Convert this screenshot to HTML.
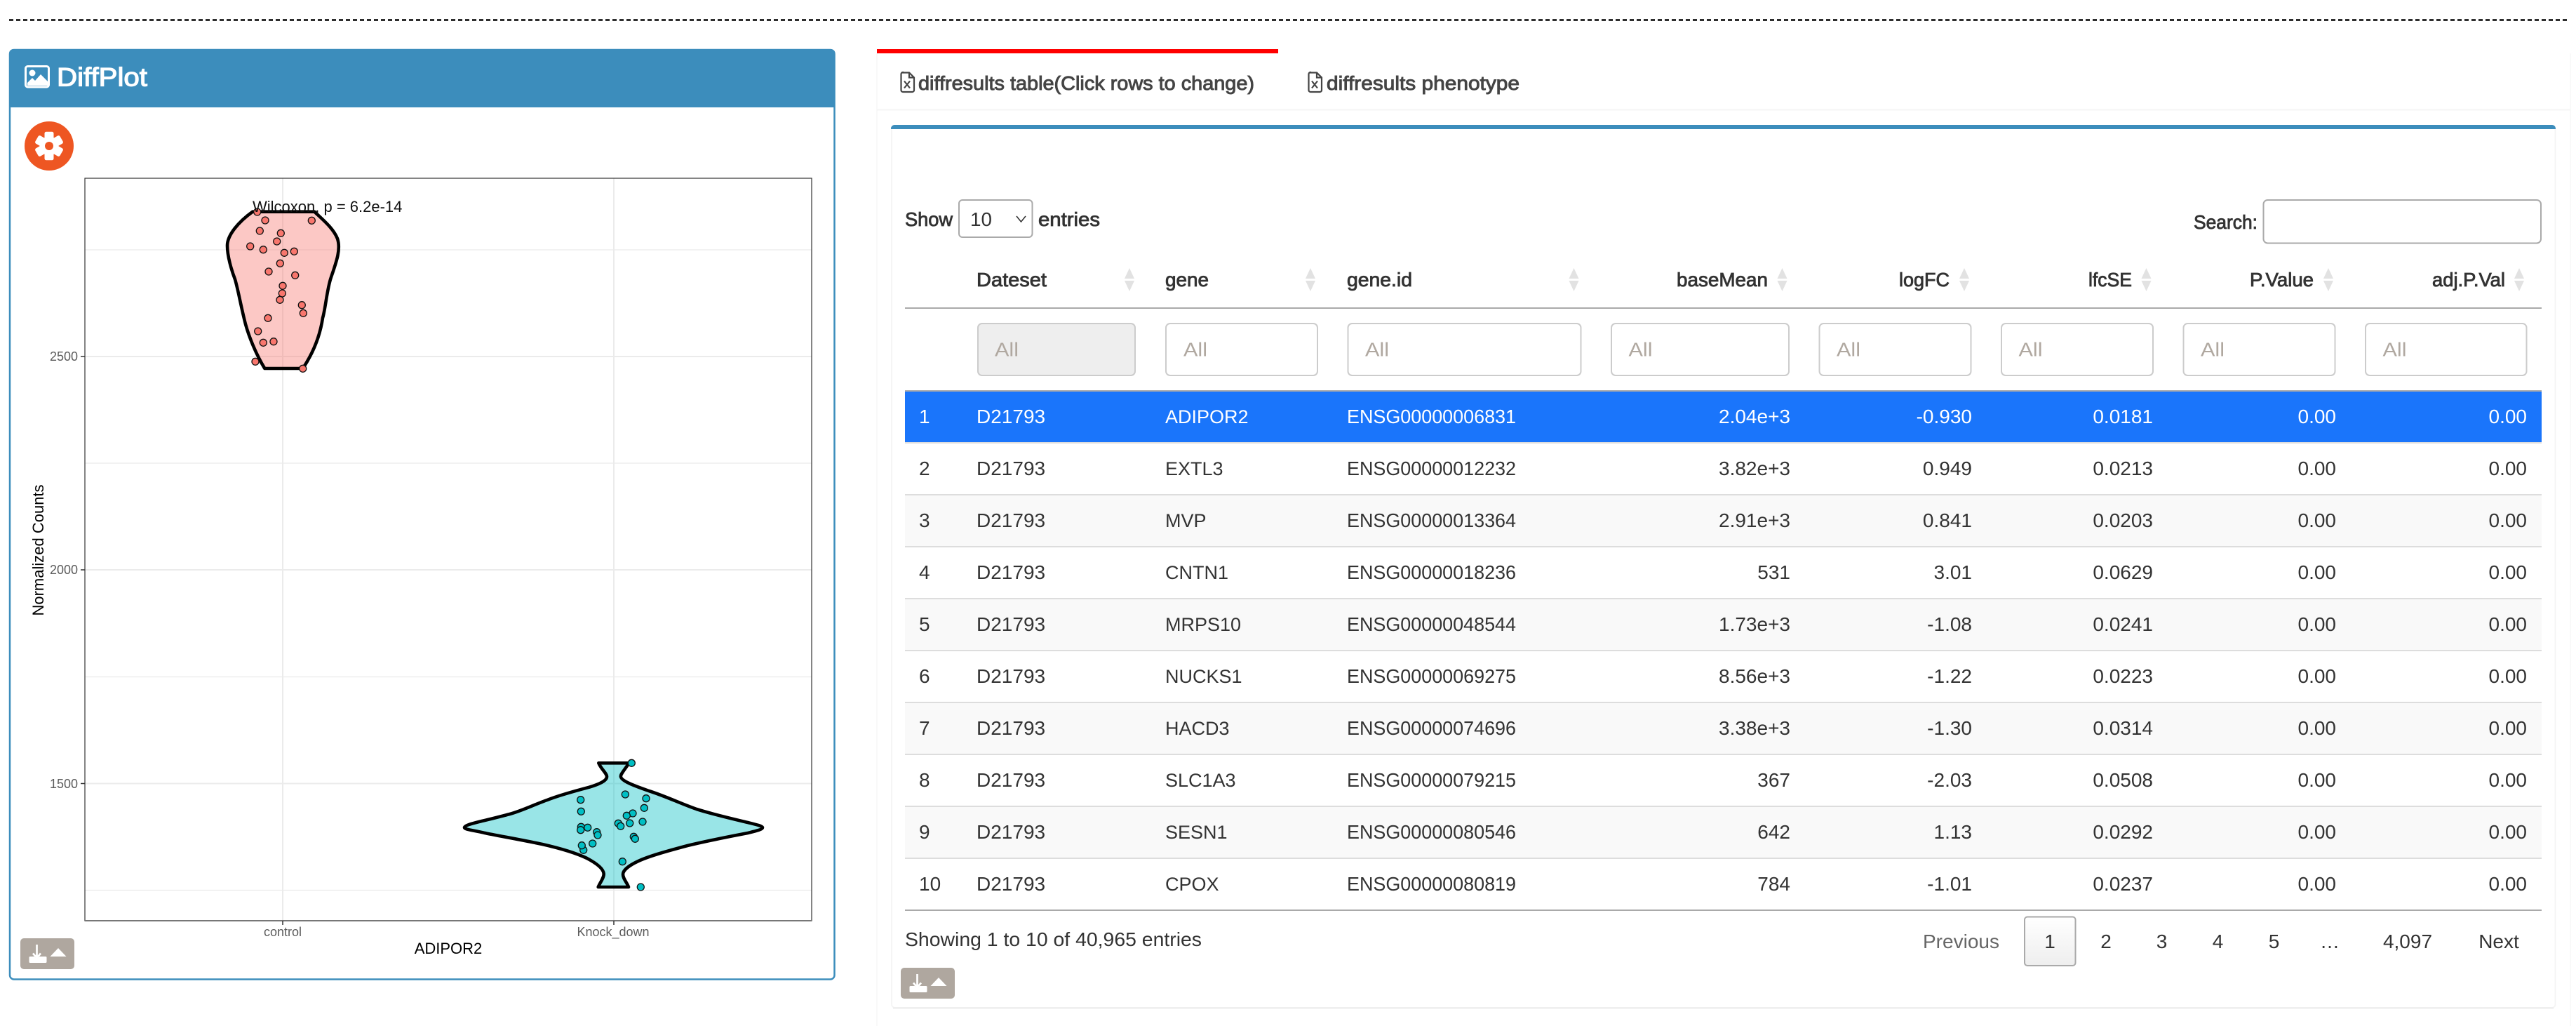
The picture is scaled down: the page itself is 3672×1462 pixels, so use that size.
<!DOCTYPE html>
<html><head><meta charset="utf-8"><title>DiffPlot</title>
<style>
html,body{margin:0;padding:0;background:#fff;width:3672px;height:1462px;overflow:hidden}
svg{display:block}
text{font-family:"Liberation Sans",Arial,sans-serif;font-size:28px;fill:#333}
.m{stroke:#333;stroke-width:.85px}
.t{fill:#444;stroke:#444;stroke-width:.95px}
.al{fill:#b0a8a0}
.r{text-anchor:end}
.w text{fill:#fff}
.arrow{fill:#e2e2e2}
.pg{text-anchor:middle}
.ax{font-size:18px;fill:#5c5c5c}
.f{fill:#fff;stroke:#ccc;stroke-width:2}
.pd circle{fill:#F8766D;stroke:#111;stroke-width:1.3}
.td circle{fill:#00BFC4;stroke:#111;stroke-width:1.3}
</style></head><body>
<svg xmlns="http://www.w3.org/2000/svg" width="3672" height="1462" viewBox="0 0 3672 1462">
<defs>
<g id="dl">
<rect width="77" height="44" rx="5" fill="#afa79f"/>
<path d="M12,26 h8 l3.5,3.5 l3.5,-3.5 h9 a1.5,1.5 0 0 1 1.5,1.5 v6 a1.5,1.5 0 0 1 -1.5,1.5 h-22 a1.5,1.5 0 0 1 -1.5,-1.5 v-6 a1.5,1.5 0 0 1 1.5,-1.5z" fill="#fff"/>
<path d="M23.5,9 V28 M18,21.500 L23.5,28 L29,21.500" fill="none" stroke="#fff" stroke-width="2.700"/>
<path d="M42.5,26 L54,14 L65.5,26Z" fill="#fff"/>
</g>
<g id="xl" fill="none" stroke="#444" stroke-width="2.2">
<path d="M5,1 h9 l7,7 v18 a2.5,2.5 0 0 1 -2.5,2.5 h-13.5 a2.5,2.5 0 0 1 -2.5,-2.5 v-23 a2.5,2.5 0 0 1 2.5,-2.5z"/>
<path d="M14,1 v7 h7"/>
<path d="M7,13 L15,23 M15,13 L7,23"/>
</g>
<g id="sort"><path class="arrow" d="M0,-14 L7,1 H-7Z M0,19 L7,4 H-7Z"/></g>
</defs>

<!-- dashed rule -->
<line x1="13" y1="28.5" x2="3663" y2="28.5" stroke="#000" stroke-width="2.4" stroke-dasharray="6 4"/>

<!-- LEFT PANEL -->
<rect x="14" y="71" width="1175.500" height="1324.500" rx="6" fill="#fff" stroke="#3c8dbc" stroke-width="2.500"/>
<path d="M13,153 V76 a6,6 0 0 1 6,-6 H1184.500 a6,6 0 0 1 6,6 V153Z" fill="#3c8dbc"/>
<g>
<rect x="36.500" y="94.500" width="33" height="29.500" rx="3" fill="none" stroke="#fff" stroke-width="3"/>
<circle cx="46" cy="104" r="4.500" fill="#fff"/>
<path d="M39,122 V118 L46,111 L50,115 L58,106 L68,116 V122Z" fill="#fff"/>
<text x="81" y="122.500" textLength="129" lengthAdjust="spacingAndGlyphs" style="font-size:37px;fill:#fff;stroke:#fff;stroke-width:1.200px">DiffPlot</text>
</g>
<circle cx="70" cy="208" r="35" fill="#ee5622"/>
<g fill="#fff">
<circle cx="70" cy="208" r="13.500"/>
<rect x="63.500" y="187.700" width="13" height="40.600" rx="2.500"/>
<rect x="63.500" y="187.700" width="13" height="40.600" rx="2.500" transform="rotate(60 70 208)"/>
<rect x="63.500" y="187.700" width="13" height="40.600" rx="2.500" transform="rotate(120 70 208)"/>
</g>
<circle cx="70" cy="208" r="6" fill="#ee5622"/>

<!-- plot -->
<g stroke="#ebebeb" fill="none">
<path stroke-width="1.200" d="M121,356H1157 M121,660H1157 M121,964.500H1157 M121,1268.500H1157"/>
<path stroke-width="2" d="M121,508H1157 M121,812H1157 M121,1116.500H1157 M403,254V1312 M875,254V1312"/>
</g>
<path d="M360,301.700 L448.300,301.700 C460,313 475,325 481,340 C486,355 480,372 472,395 C466,412 464,440 460,453 C456,480 445,505 431.700,525 L377.300,525 C365,505 355,480 350,462 C343,435 340,415 335,398 C330,385 324,365 324,350 C324,335 340,316 360,301.700Z" fill="#F8766D" fill-opacity=".4" stroke="#000" stroke-width="4.600" stroke-linejoin="round"/>
<g class="pd">
<circle cx="366.700" cy="302" r="5"/><circle cx="378" cy="314" r="5"/><circle cx="444.300" cy="314.300" r="5"/><circle cx="370.300" cy="329" r="5"/><circle cx="400.300" cy="332.300" r="5"/><circle cx="394.700" cy="344" r="5"/><circle cx="356.700" cy="351" r="5"/><circle cx="375.300" cy="355.700" r="5"/><circle cx="405.300" cy="360.300" r="5"/><circle cx="419.300" cy="358.300" r="5"/><circle cx="399.300" cy="375.300" r="5"/><circle cx="383" cy="387" r="5"/><circle cx="420.700" cy="392.300" r="5"/><circle cx="403" cy="407.300" r="5"/><circle cx="402.300" cy="418" r="5"/><circle cx="399" cy="427.300" r="5"/><circle cx="430.300" cy="434.700" r="5"/><circle cx="432.300" cy="446.300" r="5"/><circle cx="382" cy="453.300" r="5"/><circle cx="367.700" cy="472" r="5"/><circle cx="375.300" cy="488.300" r="5"/><circle cx="390" cy="486.700" r="5"/><circle cx="364" cy="515.300" r="5"/><circle cx="431.700" cy="525.300" r="5"/>
</g>
<path d="M853.300,1087.300 L896.700,1087.300 C888,1100 884,1104 885,1107 C886,1113 905,1120 925,1127 C950,1135 970,1145 993,1153 C1015,1160 1045,1167 1066,1172 C1078,1175 1087,1177 1087,1179.300 C1087,1182 1078,1184 1066,1187 C1045,1191 1005,1199 980,1205 C950,1213 925,1220 910,1227 C897,1233 888,1240 888,1246 C888,1252 894,1258 896,1264 L852.700,1264 C855,1258 861,1251 860.700,1245 C860,1237 848,1229 836.700,1223 C820,1215 795,1208 773,1203 C745,1197 705,1190 690,1186.700 C675,1183 662,1182 662,1179.300 C662,1176 675,1173 686.700,1170 C700,1167 715,1163 726.700,1160 C745,1155 765,1145 780,1140 C795,1134 820,1127 840,1121.700 C852,1118 865,1113 865,1106.700 C865,1102 857,1096 853.300,1087.300Z" fill="#00BFC4" fill-opacity=".4" stroke="#000" stroke-width="4.600" stroke-linejoin="round"/>
<g class="td">
<circle cx="900.300" cy="1087.300" r="5"/><circle cx="827.700" cy="1139.700" r="5"/><circle cx="828.300" cy="1156.300" r="5"/><circle cx="828.300" cy="1178.300" r="5"/><circle cx="827.700" cy="1182.700" r="5"/><circle cx="837.700" cy="1179.300" r="5"/><circle cx="850.700" cy="1185.700" r="5"/><circle cx="852" cy="1190" r="5"/><circle cx="844.700" cy="1202" r="5"/><circle cx="831.700" cy="1211.300" r="5"/><circle cx="829.300" cy="1204.700" r="5"/><circle cx="891.300" cy="1132" r="5"/><circle cx="921" cy="1137.700" r="5"/><circle cx="918.300" cy="1151.300" r="5"/><circle cx="902" cy="1159" r="5"/><circle cx="893.300" cy="1162.300" r="5"/><circle cx="881.300" cy="1173.300" r="5"/><circle cx="884.700" cy="1177.300" r="5"/><circle cx="897.700" cy="1173" r="5"/><circle cx="916" cy="1171" r="5"/><circle cx="903.300" cy="1192.300" r="5"/><circle cx="905.300" cy="1195.300" r="5"/><circle cx="887.300" cy="1227.700" r="5"/><circle cx="913.300" cy="1264" r="5"/>
</g>
<rect x="121" y="254" width="1036" height="1058" fill="none" stroke="#333" stroke-width="1.200"/>
<path d="M121,1312H1157" stroke="#777" stroke-width="2"/>
<path d="M115,508H121 M115,812H121 M115,1116.500H121 M403,1312V1318 M875,1312V1318" stroke="#333" stroke-width="1.500"/>
<text x="360" y="302" style="font-size:22px;fill:#111">Wilcoxon, p = 6.2e-14</text>
<text class="ax r" x="111" y="514">2500</text>
<text class="ax r" x="111" y="818">2000</text>
<text class="ax r" x="111" y="1123">1500</text>
<text class="ax" x="403" y="1334" text-anchor="middle">control</text>
<text class="ax" x="874" y="1334" text-anchor="middle">Knock_down</text>
<text x="639" y="1359" text-anchor="middle" style="font-size:22px;fill:#000">ADIPOR2</text>
<text x="0" y="0" transform="translate(62 784) rotate(-90)" text-anchor="middle" style="font-size:22px;fill:#000">Normalized Counts</text>
<use href="#dl" x="29" y="1337"/>

<!-- RIGHT: tabs -->
<path d="M1250,76V1462 M3664,76V1462" stroke="#f7f7f7" stroke-width="1.500" fill="none"/>
<path d="M1250,156.500H3664" stroke="#f4f4f4" stroke-width="2"/>
<rect x="1250" y="70" width="572" height="6" fill="#f00"/>
<use href="#xl" x="1282" y="102.500"/>
<text class="t" x="1309" y="128" textLength="479" lengthAdjust="spacingAndGlyphs">diffresults table(Click rows to change)</text>
<use href="#xl" x="1863" y="102.500"/>
<text class="t" x="1891" y="128" textLength="275" lengthAdjust="spacingAndGlyphs">diffresults phenotype</text>

<!-- box -->
<rect x="1271" y="180" width="2371.500" height="1256" rx="5" fill="#fff" stroke="#f5f5f5" stroke-width="2"/>
<path d="M1273,1436.500H3640" stroke="#ececec" stroke-width="2"/>
<path d="M1270,184 v-1 a5,5 0 0 1 5,-5 H3638 a5,5 0 0 1 5,5 v1Z" fill="#3c8dbc"/>

<!-- length + search -->
<text class="m" x="1290" y="322" textLength="68" lengthAdjust="spacingAndGlyphs">Show</text>
<rect x="1367" y="285" width="104.500" height="53" rx="5" fill="#fff" stroke="#aaa" stroke-width="2"/>
<text x="1383" y="322" textLength="31" lengthAdjust="spacingAndGlyphs">10</text>
<path d="M1449,308 L1455.500,316 L1462,308" fill="none" stroke="#333" stroke-width="1.600"/>
<text class="m" x="1480" y="322" textLength="88" lengthAdjust="spacingAndGlyphs">entries</text>
<text class="m" x="3127" y="326" textLength="91" lengthAdjust="spacingAndGlyphs">Search:</text>
<rect x="3226.500" y="285" width="395.500" height="61.500" rx="6" fill="#fff" stroke="#aaa" stroke-width="2"/>

<!-- header -->
<text class="m" x="1392" y="408" textLength="100" lengthAdjust="spacingAndGlyphs">Dateset</text>
<text class="m" x="1661" y="408" textLength="62" lengthAdjust="spacingAndGlyphs">gene</text>
<text class="m" x="1920" y="408" textLength="93" lengthAdjust="spacingAndGlyphs">gene.id</text>
<text class="m" x="2390" y="408" textLength="130" lengthAdjust="spacingAndGlyphs">baseMean</text>
<text class="m" x="2707" y="408" textLength="72" lengthAdjust="spacingAndGlyphs">logFC</text>
<text class="m" x="2977" y="408" textLength="62" lengthAdjust="spacingAndGlyphs">lfcSE</text>
<text class="m" x="3207" y="408" textLength="91" lengthAdjust="spacingAndGlyphs">P.Value</text>
<text class="m" x="3467" y="408" textLength="104" lengthAdjust="spacingAndGlyphs">adj.P.Val</text>
<use href="#sort" x="1610" y="396"/><use href="#sort" x="1868" y="396"/><use href="#sort" x="2243.500" y="396"/><use href="#sort" x="2540.500" y="396"/><use href="#sort" x="2800" y="396"/><use href="#sort" x="3059.500" y="396"/><use href="#sort" x="3319" y="396"/><use href="#sort" x="3591" y="396"/>
<rect x="1290" y="438" width="2333" height="2" fill="#aaa"/>

<!-- filters -->
<rect class="f" x="1394" y="461" width="224" height="74" rx="6" style="fill:#eee"/>
<rect class="f" x="1662" y="461" width="216" height="74" rx="6"/>
<rect class="f" x="1921.500" y="461" width="332" height="74" rx="6"/>
<rect class="f" x="2297" y="461" width="253" height="74" rx="6"/>
<rect class="f" x="2593.500" y="461" width="216" height="74" rx="6"/>
<rect class="f" x="2853" y="461" width="216" height="74" rx="6"/>
<rect class="f" x="3112.500" y="461" width="216" height="74" rx="6"/>
<rect class="f" x="3372" y="461" width="229.500" height="74" rx="6"/>
<g class="al">
<text class="al" x="1418" y="507.500" textLength="34" lengthAdjust="spacingAndGlyphs">All</text>
<text class="al" x="1687" y="507.500" textLength="34" lengthAdjust="spacingAndGlyphs">All</text>
<text class="al" x="1946" y="507.500" textLength="34" lengthAdjust="spacingAndGlyphs">All</text>
<text class="al" x="2321.500" y="507.500" textLength="34" lengthAdjust="spacingAndGlyphs">All</text>
<text class="al" x="2618" y="507.500" textLength="34" lengthAdjust="spacingAndGlyphs">All</text>
<text class="al" x="2877.500" y="507.500" textLength="34" lengthAdjust="spacingAndGlyphs">All</text>
<text class="al" x="3137" y="507.500" textLength="34" lengthAdjust="spacingAndGlyphs">All</text>
<text class="al" x="3396.500" y="507.500" textLength="34" lengthAdjust="spacingAndGlyphs">All</text>
</g>

<!-- rows -->
<rect x="1290" y="556" width="2333" height="2" fill="#aaa"/>
<rect x="1290" y="558" width="2333" height="72" fill="#1a75fb"/>
<rect x="1290" y="706" width="2333" height="72" fill="#f9f9f9"/>
<rect x="1290" y="854" width="2333" height="72" fill="#f9f9f9"/>
<rect x="1290" y="1002" width="2333" height="72" fill="#f9f9f9"/>
<rect x="1290" y="1150" width="2333" height="72" fill="#f9f9f9"/>
<path d="M1290,631H3623 M1290,705H3623 M1290,779H3623 M1290,853H3623 M1290,927H3623 M1290,1001H3623 M1290,1075H3623 M1290,1149H3623 M1290,1223H3623" stroke="#ddd" stroke-width="2"/>
<rect x="1290" y="1296" width="2333" height="2" fill="#aaa"/>

<g class="w">
<text x="1310" y="603">1</text><text x="1392" y="603">D21793</text><text x="1661" y="603" style="font-size:27px">ADIPOR2</text><text x="1920" y="603" textLength="241" lengthAdjust="spacingAndGlyphs">ENSG00000006831</text><text class="r" x="2552" y="603">2.04e+3</text><text class="r" x="2811" y="603">-0.930</text><text class="r" x="3069" y="603">0.0181</text><text class="r" x="3330" y="603">0.00</text><text class="r" x="3602" y="603">0.00</text>
</g>
<text x="1310" y="677">2</text><text x="1392" y="677">D21793</text><text x="1661" y="677" style="font-size:27px">EXTL3</text><text x="1920" y="677" textLength="241" lengthAdjust="spacingAndGlyphs">ENSG00000012232</text><text class="r" x="2552" y="677">3.82e+3</text><text class="r" x="2811" y="677">0.949</text><text class="r" x="3069" y="677">0.0213</text><text class="r" x="3330" y="677">0.00</text><text class="r" x="3602" y="677">0.00</text>
<text x="1310" y="751">3</text><text x="1392" y="751">D21793</text><text x="1661" y="751" style="font-size:27px">MVP</text><text x="1920" y="751" textLength="241" lengthAdjust="spacingAndGlyphs">ENSG00000013364</text><text class="r" x="2552" y="751">2.91e+3</text><text class="r" x="2811" y="751">0.841</text><text class="r" x="3069" y="751">0.0203</text><text class="r" x="3330" y="751">0.00</text><text class="r" x="3602" y="751">0.00</text>
<text x="1310" y="825">4</text><text x="1392" y="825">D21793</text><text x="1661" y="825" style="font-size:27px">CNTN1</text><text x="1920" y="825" textLength="241" lengthAdjust="spacingAndGlyphs">ENSG00000018236</text><text class="r" x="2552" y="825">531</text><text class="r" x="2811" y="825">3.01</text><text class="r" x="3069" y="825">0.0629</text><text class="r" x="3330" y="825">0.00</text><text class="r" x="3602" y="825">0.00</text>
<text x="1310" y="899">5</text><text x="1392" y="899">D21793</text><text x="1661" y="899" style="font-size:27px">MRPS10</text><text x="1920" y="899" textLength="241" lengthAdjust="spacingAndGlyphs">ENSG00000048544</text><text class="r" x="2552" y="899">1.73e+3</text><text class="r" x="2811" y="899">-1.08</text><text class="r" x="3069" y="899">0.0241</text><text class="r" x="3330" y="899">0.00</text><text class="r" x="3602" y="899">0.00</text>
<text x="1310" y="973">6</text><text x="1392" y="973">D21793</text><text x="1661" y="973" style="font-size:27px">NUCKS1</text><text x="1920" y="973" textLength="241" lengthAdjust="spacingAndGlyphs">ENSG00000069275</text><text class="r" x="2552" y="973">8.56e+3</text><text class="r" x="2811" y="973">-1.22</text><text class="r" x="3069" y="973">0.0223</text><text class="r" x="3330" y="973">0.00</text><text class="r" x="3602" y="973">0.00</text>
<text x="1310" y="1047">7</text><text x="1392" y="1047">D21793</text><text x="1661" y="1047" style="font-size:27px">HACD3</text><text x="1920" y="1047" textLength="241" lengthAdjust="spacingAndGlyphs">ENSG00000074696</text><text class="r" x="2552" y="1047">3.38e+3</text><text class="r" x="2811" y="1047">-1.30</text><text class="r" x="3069" y="1047">0.0314</text><text class="r" x="3330" y="1047">0.00</text><text class="r" x="3602" y="1047">0.00</text>
<text x="1310" y="1121">8</text><text x="1392" y="1121">D21793</text><text x="1661" y="1121" style="font-size:27px">SLC1A3</text><text x="1920" y="1121" textLength="241" lengthAdjust="spacingAndGlyphs">ENSG00000079215</text><text class="r" x="2552" y="1121">367</text><text class="r" x="2811" y="1121">-2.03</text><text class="r" x="3069" y="1121">0.0508</text><text class="r" x="3330" y="1121">0.00</text><text class="r" x="3602" y="1121">0.00</text>
<text x="1310" y="1195">9</text><text x="1392" y="1195">D21793</text><text x="1661" y="1195" style="font-size:27px">SESN1</text><text x="1920" y="1195" textLength="241" lengthAdjust="spacingAndGlyphs">ENSG00000080546</text><text class="r" x="2552" y="1195">642</text><text class="r" x="2811" y="1195">1.13</text><text class="r" x="3069" y="1195">0.0292</text><text class="r" x="3330" y="1195">0.00</text><text class="r" x="3602" y="1195">0.00</text>
<text x="1310" y="1269">10</text><text x="1392" y="1269">D21793</text><text x="1661" y="1269" style="font-size:27px">CPOX</text><text x="1920" y="1269" textLength="241" lengthAdjust="spacingAndGlyphs">ENSG00000080819</text><text class="r" x="2552" y="1269">784</text><text class="r" x="2811" y="1269">-1.01</text><text class="r" x="3069" y="1269">0.0237</text><text class="r" x="3330" y="1269">0.00</text><text class="r" x="3602" y="1269">0.00</text>

<!-- footer -->
<text x="1290" y="1348" textLength="423" lengthAdjust="spacingAndGlyphs">Showing 1 to 10 of 40,965 entries</text>
<text x="2741" y="1351" textLength="109" lengthAdjust="spacingAndGlyphs" style="fill:#666">Previous</text>
<linearGradient id="pg1" x1="0" y1="0" x2="0" y2="1"><stop offset="0" stop-color="#fff"/><stop offset="1" stop-color="#eee"/></linearGradient>
<rect x="2886" y="1306.500" width="72.500" height="69.500" rx="4" fill="url(#pg1)" stroke="#aaa" stroke-width="2"/>
<text class="pg" x="2922" y="1351">1</text>
<text class="pg" x="3002" y="1351">2</text>
<text class="pg" x="3081.500" y="1351">3</text>
<text class="pg" x="3161.500" y="1351">4</text>
<text class="pg" x="3241.500" y="1351">5</text>
<text class="pg" x="3321" y="1351">…</text>
<text class="pg" x="3432" y="1351">4,097</text>
<text class="pg" x="3562" y="1351">Next</text>
<use href="#dl" x="1284" y="1379"/>
</svg>
</body></html>
